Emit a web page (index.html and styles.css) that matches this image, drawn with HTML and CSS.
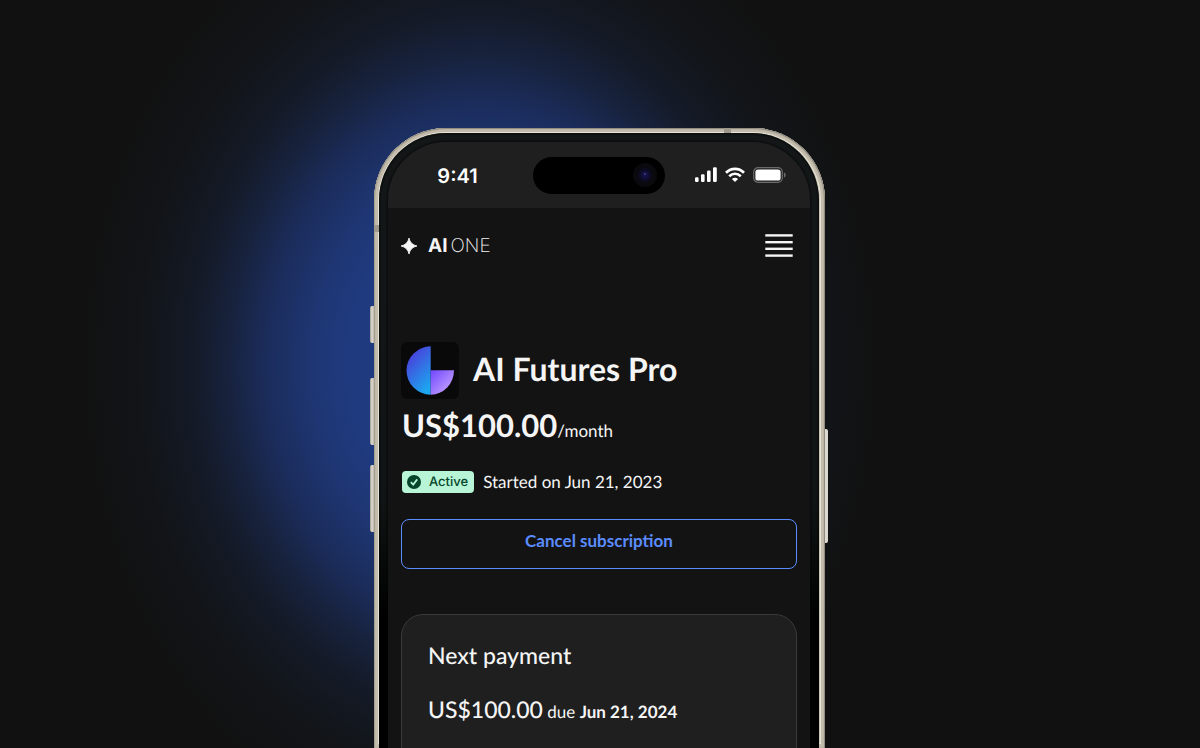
FILE: index.html
```
<!DOCTYPE html>
<html lang="en">
<head>
    <meta charset="UTF-8">
    <meta name="viewport" content="width=device-width, initial-scale=1.0">
    <title>AI One - Subscription</title>
    <link rel="stylesheet" href="styles.css">
</head>
<body>
    <div class="stage">
        <div class="phone">
            <span class="side-btn action"></span>
            <span class="side-btn volume-up"></span>
            <span class="side-btn volume-down"></span>
            <span class="side-btn power"></span>
            <span class="antenna antenna-left"></span>
            <span class="antenna antenna-top"></span>

            <div class="bezel">
                <div class="screen">
                    <div class="status-bar">
                        <span class="time">9:41</span>
                        <div class="island">
                            <svg width="24" height="24" viewBox="0 0 24 24" aria-hidden="true">
                                <circle cx="12" cy="12" r="12" fill="#0a090d"/>
                                <circle cx="12" cy="12" r="7" fill="#0d0b22"/>
                                <circle cx="12" cy="12" r="4" fill="#121040"/>
                                <circle cx="12" cy="11" r="1.2" fill="#35357a"/>
                            </svg>
                        </div>
                        <div class="status-icons">
                            <svg width="22" height="16" viewBox="0 0 22 16" fill="#fff" aria-hidden="true">
                                <rect x="0" y="10.2" width="3.6" height="4.8" rx="1.2"/>
                                <rect x="6" y="7.3" width="3.6" height="7.7" rx="1.2"/>
                                <rect x="12" y="3.6" width="3.6" height="11.4" rx="1.2"/>
                                <rect x="18" y="0.3" width="3.8" height="14.7" rx="1.2"/>
                            </svg>
                            <svg width="20" height="16" viewBox="0 0 20 16" aria-hidden="true">
                                <path d="M1 5.7 C6.2 0.6 13.8 0.6 19 5.7" fill="none" stroke="#fff" stroke-width="2.8"/>
                                <path d="M4.2 9.2 C7.6 6 12.4 6 15.8 9.2" fill="none" stroke="#fff" stroke-width="2.6"/>
                                <path d="M6.9 12 C8.7 10.4 11.3 10.4 13.1 12 L10 15.1 Z" fill="#fff"/>
                            </svg>
                            <svg width="33" height="16" viewBox="0 0 33 16" aria-hidden="true">
                                <rect x="0.7" y="0.7" width="28.6" height="14.6" rx="4.4" fill="none" stroke="#6c6c6c" stroke-width="1.2"/>
                                <rect x="2.4" y="2.4" width="25.2" height="11.2" rx="2.6" fill="#fff"/>
                                <path d="M31 5.4 C33.2 6.4 33.2 9.6 31 10.6 Z" fill="#6c6c6c"/>
                            </svg>
                        </div>
                    </div>

                    <header class="app-header">
                        <a href="#" class="brand">
                            <svg width="16" height="16" viewBox="0 0 16 16" aria-hidden="true">
                                <path d="M8 0 C8.9 4.4 11.6 7.1 16 8 C11.6 8.9 8.9 11.6 8 16 C7.1 11.6 4.4 8.9 0 8 C4.4 7.1 7.1 4.4 8 0 Z" fill="#f5f5f5" stroke="#f5f5f5" stroke-width="0.8"/>
                            </svg>
                            <span class="brand-name"><strong>AI</strong><span>ONE</span></span>
                        </a>
                        <button class="menu-btn" aria-label="Menu">
                            <svg width="28" height="24" viewBox="0 0 28 24" fill="#f5f5f5" aria-hidden="true">
                                <rect x="0.3" y="0.2" width="27.4" height="2.4"/>
                                <rect x="0.3" y="7" width="27.4" height="2.4"/>
                                <rect x="0.3" y="13.6" width="27.4" height="2.4"/>
                                <rect x="0.3" y="20.4" width="27.4" height="2.4"/>
                            </svg>
                        </button>
                    </header>

                    <main class="content">
                        <div class="plan">
                            <svg class="plan-logo" width="58" height="57" viewBox="0 0 58 57" aria-hidden="true">
                                <defs>
                                    <linearGradient id="half" x1="0.15" y1="0" x2="0.7" y2="1">
                                        <stop offset="0" stop-color="#4f32d8"/>
                                        <stop offset="1" stop-color="#1ba8f0"/>
                                    </linearGradient>
                                    <linearGradient id="quarter" x1="0" y1="0" x2="0.75" y2="0.75">
                                        <stop offset="0" stop-color="#7047ff"/>
                                        <stop offset="1" stop-color="#b995ff"/>
                                    </linearGradient>
                                </defs>
                                <rect width="58" height="57" rx="6" fill="#090909"/>
                                <path d="M29.7 4.3 A24.2 24.2 0 0 0 29.7 52.7 Z" fill="url(#half)"/>
                                <path d="M29.7 28.2 H53 A23.6 24.4 0 0 1 29.7 52.7 Z" fill="url(#quarter)"/>
                            </svg>
                            <h1>AI Futures Pro</h1>
                        </div>
                        <p class="price"><strong>US$100.00</strong>/month</p>

                        <div class="status">
                            <span class="badge">
                                <svg width="14" height="14" viewBox="0 0 14 14" aria-hidden="true">
                                    <circle cx="7" cy="7" r="7" fill="#05452b"/>
                                    <path d="M3.8 7.2 L6.2 9.6 L10.2 4.4" fill="none" stroke="#b8f5d6" stroke-width="1.8"/>
                                </svg>
                                Active
                            </span>
                            <span class="started">Started on Jun 21, 2023</span>
                        </div>

                        <button class="cancel-btn">Cancel subscription</button>

                        <section class="card">
                            <h2>Next payment</h2>
                            <p class="due"><span class="amount">US$100.00</span> due <strong>Jun 21, 2024</strong></p>
                        </section>
                    </main>
                </div>
            </div>
        </div>
    </div>
</body>
</html>
```
FILE: styles.css
```
:root {
    --bg: #111111;
    --surface: #1f1f1f;
    --text: #f5f5f5;
    --blue: #5b8cff;
    --metal: #c9c3b4;
}

* {
    box-sizing: border-box;
    margin: 0;
    padding: 0;
}

body {
    font-family: Lato, sans-serif;
    background: var(--bg);
    color: var(--text);
    text-rendering: geometricPrecision;
}

button {
    font-family: inherit;
    background: none;
    border: none;
    cursor: pointer;
}

.stage {
    display: flex;
    justify-content: center;
    height: 100vh;
    min-height: 640px;
    padding: 128px 1px 0 0;
    overflow: hidden;
    background: radial-gradient(400px 490px at 40% 365px, #1f3b82 0, #1f3a7e 33%, #1e3673 42%, #1b2c5a 54%, #17223d 63%, #141a27 72%, #121519 84%, #111111 100%);
}

/* Phone */
.phone {
    position: relative;
    display: flex;
    width: 100%;
    max-width: 451px;
    padding: 5px 6px 0 5px;
    border-radius: 72px 72px 0 0;
    background: var(--metal);
    box-shadow: inset 0 1px 1px #8d887d, inset 1px 0 1px #a49e90, inset -1px 0 1px #8d887d, inset 0 0 0 4px #c3bcac, inset 0 0 0 5px #e6e4d6;
}

.bezel {
    flex: 1;
    display: flex;
    padding: 9px 9px 0;
    border-radius: 67px 67px 0 0;
    background: linear-gradient(#151919 0, #121616 60%, #000 80%);
    box-shadow: inset 0 0 4px #000;
}

.screen {
    flex: 1;
    border-radius: 58px 58px 0 0;
    overflow: hidden;
    background: #131313;
    box-shadow: 0 0 4px #000;
}

.side-btn {
    position: absolute;
    left: -4px;
    width: 4px;
    border-radius: 2px 0 0 2px;
    background: linear-gradient(90deg, #a19c92, #dedbd3 50%, #b9b3a6);
}

.action {
    top: 178px;
    height: 37px;
}

.volume-up {
    top: 250px;
    height: 67px;
}

.volume-down {
    top: 337px;
    height: 67px;
}

.power {
    left: auto;
    right: -3px;
    top: 301px;
    width: 3px;
    height: 114px;
    border-radius: 0 2px 2px 0;
    background: #dcdad0;
}

.antenna {
    position: absolute;
    background: #9f998d;
}

.antenna-left {
    top: 97px;
    left: 0;
    width: 5px;
    height: 7px;
}

.antenna-top {
    top: 0;
    right: 94px;
    width: 7px;
    height: 5px;
}

/* Status bar */
.status-bar {
    display: grid;
    grid-template-columns: 1fr auto 1fr;
    align-items: center;
    height: 66px;
    background: var(--surface);
}

.time {
    justify-self: center;
    padding: 2px 6px 0 0;
    font-family: Inter, sans-serif;
    font-size: 20px;
    font-weight: 600;
    line-height: 24px;
    color: #fff;
}

.island {
    display: flex;
    align-items: center;
    justify-content: flex-end;
    width: 132px;
    height: 37px;
    padding-right: 8px;
    border-radius: 19px;
    background: #000;
}

.status-icons {
    display: flex;
    align-items: center;
    justify-content: flex-end;
    gap: 8px;
    padding-right: 24px;
}

/* App header */
.app-header {
    display: flex;
    align-items: center;
    justify-content: space-between;
    height: 76px;
    padding: 0 17px 0 13px;
}

.brand {
    display: flex;
    align-items: center;
    gap: 11px;
    color: var(--text);
    text-decoration: none;
}

.brand-name {
    display: flex;
    gap: 3px;
    font-family: Inter, sans-serif;
    font-size: 19px;
    font-weight: 200;
    line-height: 24px;
}

.brand strong {
    font-weight: 700;
}

.menu-btn,
.menu-btn svg {
    display: block;
}

/* Subscription */
.content {
    padding: 58px 13px 0;
}

.plan {
    display: flex;
    gap: 14px;
}

h1 {
    padding-top: 7px;
    font-size: 32px;
    font-weight: 700;
    line-height: 40px;
}

.price {
    margin-top: 6px;
    padding-left: 1px;
    font-size: 17px;
    line-height: 40px;
}

.price strong {
    font-size: 31px;
    font-weight: 700;
}

.status {
    display: flex;
    align-items: center;
    gap: 9px;
    margin-top: 20px;
    padding-left: 1px;
}

.badge {
    display: flex;
    align-items: center;
    gap: 8px;
    height: 22px;
    padding: 0 6px 0 5px;
    border-radius: 4px;
    background: #b8f5d6;
    color: #05452b;
    font-family: Inter, sans-serif;
    font-size: 13px;
    font-weight: 500;
}

.started {
    font-size: 17px;
    line-height: 22px;
}

.cancel-btn {
    display: block;
    width: 100%;
    height: 50px;
    margin-top: 26px;
    padding-bottom: 6px;
    border: 1px solid var(--blue);
    border-radius: 8px;
    color: var(--blue);
    font-size: 17px;
    font-weight: 700;
    line-height: 22px;
}

.card {
    height: 400px;
    margin-top: 45px;
    padding: 24px 26px;
    border: 1px solid #3a3a3a;
    border-radius: 22px;
    background: var(--surface);
}

h2 {
    font-size: 23px;
    font-weight: 500;
    line-height: 32px;
}

.due {
    margin-top: 22px;
    font-size: 17px;
    line-height: 32px;
}

.amount {
    font-size: 23px;
    font-weight: 500;
}

.due strong {
    font-weight: 700;
}
```
